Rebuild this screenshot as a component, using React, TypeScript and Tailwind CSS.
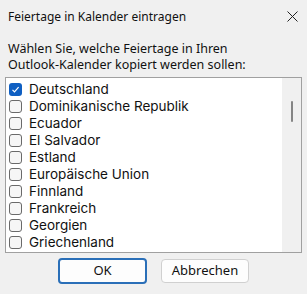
import React from 'react';

const countries = [
  'Deutschland',
  'Dominikanische Republik',
  'Ecuador',
  'El Salvador',
  'Estland',
  'Europäische Union',
  'Finnland',
  'Frankreich',
  'Georgien',
  'Griechenland',
];

const Box: React.FC<{ checked: boolean }> = ({ checked }) =>
  checked ? (
    <span className="flex h-[13px] w-[13px] shrink-0 items-center justify-center rounded-[3px] bg-[#0f5fc2]">
      <svg width="9" height="9" viewBox="0 0 9 9">
        <path d="M1.5 4.8 L3.5 6.8 L7.6 2.2" fill="none" stroke="#fff" strokeWidth="1.2" />
      </svg>
    </span>
  ) : (
    <span className="h-[13px] w-[13px] shrink-0 rounded-[3px] border border-[#6a6a6a] bg-[#f6f6f6]" />
  );

export default function App() {
  return (
    <div
      className="flex h-[294px] w-[307px] flex-col bg-[#f0f0f0] text-[#111]"
      style={{ fontFamily: '"Noto Sans", "Open Sans", sans-serif' }}
    >
      <div className="flex h-[33px] items-center justify-between pl-[8px] pr-[9px] text-[12px]">
        <span>Feiertage in Kalender eintragen</span>
        <svg width="11" height="11" viewBox="0 0 11 11">
          <path d="M0.5 0.5 L10.5 10.5 M10.5 0.5 L0.5 10.5" stroke="#222" strokeWidth="1" />
        </svg>
      </div>
      <div className="mt-[8px] pl-[8px] text-[12.5px] leading-[16px]">
        <div>Wählen Sie, welche Feiertage in Ihren</div>
        <div>Outlook-Kalender kopiert werden sollen:</div>
      </div>
      <div className="mx-[5px] mt-[4px] flex h-[176px] border border-[#a0a0a0] bg-white">
        <div className="flex flex-1 flex-col pt-[3px] pl-[3px] font-['Inter',sans-serif]">
          {countries.map((c, i) => (
            <div key={c} className="flex h-[17px] items-center gap-[7px] text-[13.5px] leading-[17px]">
              <Box checked={i === 0} />
              <span>{c}</span>
            </div>
          ))}
        </div>
        <div className="flex w-[19px] justify-center bg-[#f0f0f0] pt-[23px]">
          <div className="h-[21px] w-[2px] rounded-full bg-[#858585]" />
        </div>
      </div>
      <div className="mt-[5px] flex gap-[14px] pl-[58px]">
        <button className="h-[26px] w-[89px] rounded-[4px] border-2 border-[#2a6fb8] bg-[#fdfdfd] text-[13px]">
          OK
        </button>
        <button className="mt-[1px] h-[24px] w-[88px] rounded-[4px] border border-[#d0d0d0] bg-[#fdfdfd] text-[13px]">
          Abbrechen
        </button>
      </div>
    </div>
  );
}
